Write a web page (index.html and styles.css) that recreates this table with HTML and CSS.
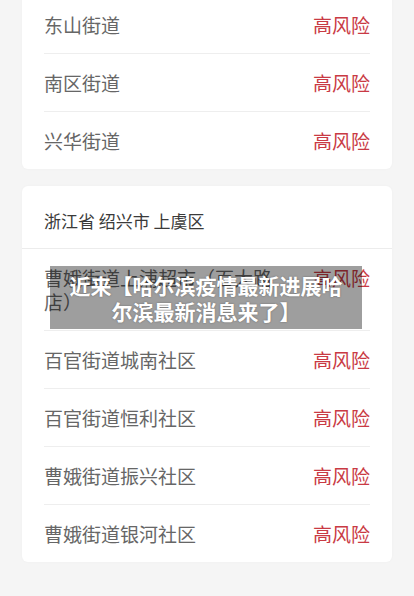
FILE: index.html
```html
<!DOCTYPE html>
<html lang="zh-CN">
<head>
<meta charset="utf-8">
<title>高风险地区</title>
<link rel="stylesheet" href="styles.css">
</head>
<body>
<div class="page">
  <section class="card first">
    <div class="row"><span class="name">东山街道</span><span class="risk">高风险</span></div>
    <div class="row"><span class="name">南区街道</span><span class="risk">高风险</span></div>
    <div class="row"><span class="name">兴华街道</span><span class="risk">高风险</span></div>
  </section>
  <section class="card">
    <div class="head">浙江省 绍兴市 上虞区</div>
    <div class="row"><span class="name">曹娥街道上浦超市（百大路店）</span><span class="risk">高风险</span></div>
    <div class="row"><span class="name">百官街道城南社区</span><span class="risk">高风险</span></div>
    <div class="row"><span class="name">百官街道恒利社区</span><span class="risk">高风险</span></div>
    <div class="row"><span class="name">曹娥街道振兴社区</span><span class="risk">高风险</span></div>
    <div class="row"><span class="name">曹娥街道银河社区</span><span class="risk">高风险</span></div>
  </section>
</div>
<div class="banner">近来【哈尔滨疫情最新进展哈尔滨最新消息来了】</div>
</body>
</html>
```
FILE: styles.css
```css
html, body {
  margin: 0;
  padding: 0;
  background: #f5f5f5;
  font-family: "Noto Sans CJK SC", "Noto Sans", sans-serif;
}
.page {
  display: flex;
  flex-direction: column;
  gap: 17px;
  padding: 0 22px 40px;
  margin-top: -4px;
}
.card {
  background: #fff;
  border-radius: 6px;
  box-shadow: 0 0 3px rgba(0,0,0,0.03);
}
.card.first {
  border-radius: 0 0 6px 6px;
}
.head {
  font-size: 17px;
  line-height: 24px;
  color: #3a3a3a;
  padding: 23px 22px 15px;
  border-bottom: 1px solid #ececec;
}
.row {
  display: flex;
  justify-content: space-between;
  align-items: flex-start;
  margin: 0 22px;
  padding: 17px 0 16px;
  border-bottom: 1px solid #eeeeee;
  font-size: 19px;
  line-height: 24px;
}
.row:last-child {
  border-bottom: none;
}
.name {
  color: #666;
  max-width: 250px;
}
.risk {
  color: #c93a44;
  flex-shrink: 0;
}
.banner {
  position: absolute;
  left: 50px;
  top: 266px;
  width: 312px;
  box-sizing: border-box;
  padding: 6px 19px 5px;
  background: rgba(0,0,0,0.38);
  color: #fff;
  font-weight: 700;
  font-size: 21px;
  line-height: 26px;
  text-align: center;
  text-shadow: 0 0 2px rgba(0,0,0,0.35);
}
```
